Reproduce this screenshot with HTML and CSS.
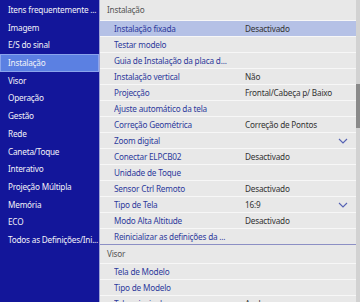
FILE: index.html
```html
<!DOCTYPE html>
<html>
<head>
  <meta charset="UTF-8">
  <title>Menu de Configuração</title>
  <link rel="stylesheet" href="styles.css">
</head>
<body>
  <div class="screen">
    <!-- Main menu -->
    <ul class="main-menu">
      <li>Itens frequentemente ...</li>
      <li>Imagem</li>
      <li>E/S do sinal</li>
      <li class="active">Instalação</li>
      <li>Visor</li>
      <li>Operação</li>
      <li>Gestão</li>
      <li>Rede</li>
      <li>Caneta/Toque</li>
      <li>Interativo</li>
      <li>Projeção Múltipla</li>
      <li>Memória</li>
      <li>ECO</li>
      <li>Todos as Definições/Ini...</li>
    </ul>

    <!-- Sub menu -->
    <div class="sub-menu">
      <div class="section-title">Instalação</div>
      <div class="row selected"><span class="label">Instalação fixada</span><span class="value">Desactivado</span></div>
      <div class="row"><span class="label">Testar modelo</span></div>
      <div class="row"><span class="label">Guia de Instalação da placa d...</span></div>
      <div class="row"><span class="label">Instalação vertical</span><span class="value">Não</span></div>
      <div class="row"><span class="label">Projecção</span><span class="value">Frontal/Cabeça p/ Baixo</span></div>
      <div class="row"><span class="label">Ajuste automático da tela</span></div>
      <div class="row"><span class="label">Correção Geométrica</span><span class="value">Correção de Pontos</span></div>
      <div class="row"><span class="label">Zoom digital</span>
        <svg class="chevron" width="10" height="6" viewBox="0 0 10 6" fill="none" stroke="currentColor" stroke-width="1.1"><polyline points="1 1 5 5 9 1"></polyline></svg>
      </div>
      <div class="row"><span class="label">Conectar ELPCB02</span><span class="value">Desactivado</span></div>
      <div class="row"><span class="label">Unidade de Toque</span></div>
      <div class="row"><span class="label">Sensor Ctrl Remoto</span><span class="value">Desactivado</span></div>
      <div class="row"><span class="label">Tipo de Tela</span><span class="value">16:9</span>
        <svg class="chevron" width="10" height="6" viewBox="0 0 10 6" fill="none" stroke="currentColor" stroke-width="1.1"><polyline points="1 1 5 5 9 1"></polyline></svg>
      </div>
      <div class="row"><span class="label">Modo Alta Altitude</span><span class="value">Desactivado</span></div>
      <div class="row last"><span class="label">Reinicializar as definições da ...</span></div>
      <div class="section-title second">Visor</div>
      <div class="row"><span class="label">Tela de Modelo</span></div>
      <div class="row"><span class="label">Tipo de Modelo</span></div>
      <div class="row"><span class="label">Tela principal</span><span class="value">Azul</span></div>

      <div class="scrollbar"><div class="thumb"></div></div>
    </div>
  </div>
</body>
</html>
```

FILE: styles.css
```css
body {
  margin: 0;
  font-family: "Noto Sans", "Open Sans", sans-serif;
  font-size: 8.2px;
  letter-spacing: -0.2px;
}
.screen {
  width: 360px;
  height: 302px;
  display: flex;
  overflow: hidden;
  background-color: #e8e8e8;
}
.main-menu {
  width: 99px;
  flex-shrink: 0;
  margin: 0;
  padding: 1px 0 0 0;
  list-style: none;
  background-color: #13169a;
  border-right: 1px solid #9da3d4;
  color: #f2f2f8;
}
.main-menu li {
  height: 17.7px;
  line-height: 17.7px;
  padding-left: 8px;
  white-space: nowrap;
  overflow: hidden;
}
.main-menu li.active {
  background-color: #5b80e2;
  box-shadow: inset 0 0 0 1px #8aa4ec;
}
.sub-menu {
  flex: 1;
  position: relative;
  overflow: hidden;
}
.section-title {
  height: 20px;
  line-height: 20px;
  padding-left: 7px;
  color: #555;
  border-bottom: 1px solid #f7f7f7;
}
.section-title.second {
  height: 18px;
  line-height: 18px;
  border-bottom: 1px solid #f7f7f7;
}
.row {
  height: 15px;
  line-height: 15px;
  border-bottom: 1px solid #f7f7f7;
  display: flex;
  align-items: center;
  padding-left: 14px;
  padding-right: 8px;
  white-space: nowrap;
}
.row.selected {
  background-color: #b5c1e6;
}
.row.last {
  border-bottom: 1px solid #8c8fc4;
}
.label {
  width: 131px;
  flex-shrink: 0;
  color: #2d3a9c;
  overflow: hidden;
}
.value {
  flex: 1;
  color: #333;
}
.chevron {
  margin-left: auto;
  margin-right: 4px;
  color: #5562b4;
}
.scrollbar {
  position: absolute;
  top: 0;
  right: 0;
  width: 4px;
  height: 302px;
  background-color: #d2d2d2;
}
.thumb {
  margin-top: 84px;
  height: 44px;
  background-color: #8a8a8a;
}
```
